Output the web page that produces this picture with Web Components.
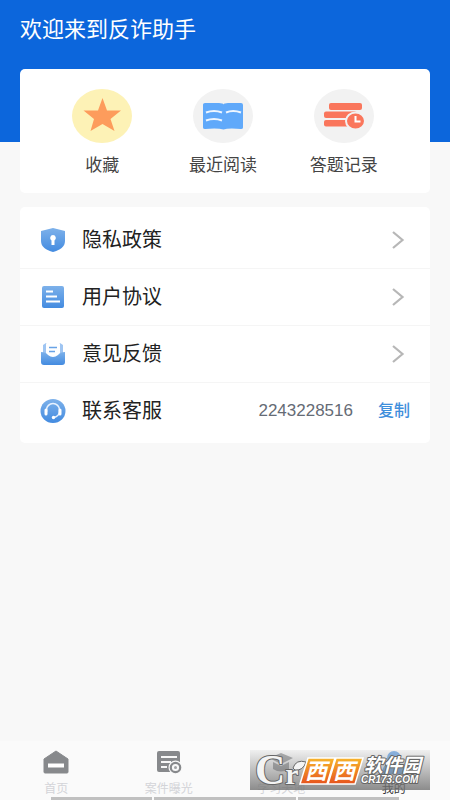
<!DOCTYPE html>
<html lang="zh-CN">
<head>
<meta charset="utf-8">
<meta name="viewport" content="width=device-width, initial-scale=1">
<title>反诈助手</title>
<style>
html, body { margin: 0; }
body { font-family: Roboto, "Noto Sans CJK SC", sans-serif; background: #f8f8f8; color: #222; }
</style>
</head>
<body>
<profile-page></profile-page>
<script>
const define = (name, html, setup) => {
  const t = document.createElement('template');
  t.innerHTML = html;
  customElements.define(name, class extends HTMLElement {
    constructor() {
      super();
      this.attachShadow({ mode: 'open' }).append(t.content.cloneNode(true));
    }
    connectedCallback() { if (setup) setup(this, this.shadowRoot); }
  });
};

const blue = '<defs><linearGradient id="g" x1="0" y1="0" x2="0" y2="1"><stop offset="0" stop-color="#7db1ea"/><stop offset="1" stop-color="#438be0"/></linearGradient></defs>';
const icons = {
  star: '<svg viewBox="0 0 60 54" width="60" height="54"><ellipse cx="30" cy="27" rx="30" ry="27" fill="#fdf2b6"/><path d="M30.500 9 35 21.500 49 21.500 38.500 30 42.500 42 30.500 35 18.500 42 22 30 11.500 21.500 26 21.500Z" fill="#fd9c5c"/></svg>',
  book: '<svg viewBox="0 0 60 54" width="60" height="54"><ellipse cx="30" cy="27" rx="30" ry="27" fill="#f2f2f2"/><path d="M10 15.500Q10 14 12 14H26Q30 14 30.500 15.500Q31 14 35 14H48Q50 14 50 16V38.500Q50 40 48 40Q35 39 30.500 40.500Q25 39 12 40Q10 40 10 38.500Z" fill="#60a9fa"/><path d="M13 23.500Q21 20.500 29 23.500M33 23.500Q40 20.500 48 23.500M13 31.500Q21 28.500 29 31.500" fill="none" stroke="#eef6ff" stroke-width="2"/></svg>',
  record: '<svg viewBox="0 0 60 54" width="60" height="54"><ellipse cx="30" cy="27" rx="30" ry="27" fill="#f2f2f2"/><g fill="#fa765c"><rect x="15" y="14" width="33" height="7" rx="2"/><rect x="10" y="22.500" width="33" height="6.500" rx="2"/><rect x="10" y="31" width="25" height="6.500" rx="2"/><ellipse cx="41.500" cy="32" rx="9.500" ry="8.500" stroke="#f2f2f2" stroke-width="2"/></g><path d="M41.500 27V32.500H46.500" fill="none" stroke="#fff" stroke-width="2"/></svg>',
  shield: `<svg viewBox="0 0 26 26" width="26" height="26">${blue}<path d="M13 1 25 4V14C25 20 20 23 13 25C6 23 1 20 1 14V4Z" fill="url(#g)"/><path d="M13 8a3 3 0 0 1 1.500 5.500V18h-3v-4.500A3 3 0 0 1 13 8Z" fill="#fff"/></svg>`,
  doc: `<svg viewBox="0 0 26 26" width="26" height="26">${blue}<rect x="2" y="2" width="22" height="22" rx="2" fill="url(#g)"/><path d="M6 7.500h7M6 12.500h11M6 17.500h14" stroke="#fff" stroke-width="2"/></svg>`,
  mail: `<svg viewBox="0 0 26 26" width="26" height="26">${blue}<path d="M3 4 6 2H20L23 4V12H3Z" fill="#9fc5f2"/><path d="M6 3Q6 2 7 2H19Q20 2 20 3V13Q17 16 13 16Q9 16 6 13Z" fill="#fff"/><path d="M9 6.500h8M9 10.500h6" stroke="#69a3e6" stroke-width="1.500"/><path d="M1 11Q6 11 8 14Q13 18 18 14Q20 11 25 11V21Q25 24 22 24H4Q1 24 1 21Z" fill="url(#g)"/></svg>`,
  service: `<svg viewBox="0 0 26 26" width="26" height="26">${blue}<ellipse cx="13" cy="13" rx="12.500" ry="12" fill="url(#g)"/><path d="M6.500 14V12A6.500 6.500 0 0 1 19.500 12V14Q19 18 14 19.500" fill="none" stroke="#e8f2ff" stroke-width="1.500"/><path d="M6 12v4M20 12v4" stroke="#fff" stroke-width="3" stroke-linecap="round"/><circle cx="13.500" cy="19.500" r="1.700" fill="#fff"/></svg>`,
  home: '<svg viewBox="0 0 26 24" width="26" height="24"><path d="M13 1 25 9V22Q25 23 24 23H2Q1 23 1 22V9Z" fill="#87898c" stroke="#87898c" stroke-linejoin="round"/><path d="M5 13.500H21V17.500H5Z" fill="#fff"/></svg>',
  cases: '<svg viewBox="0 0 26 24" width="26" height="24"><rect x="1" y="1" width="23" height="21" rx="2" fill="#87898c"/><path d="M5 7H21M5 12H15M5 17H11" stroke="#f8f8f8" stroke-width="2"/><circle cx="19.500" cy="17.500" r="7" fill="#f8f8f8"/><circle cx="19.500" cy="17.500" r="4.700" fill="none" stroke="#87898c" stroke-width="2.200"/><circle cx="19.500" cy="17.500" r="1.500" fill="#a0a2a5"/></svg>',
  study: '<svg viewBox="0 0 26 24" width="26" height="24"><path d="M1 8 13 3 25 8 13 14Z M5 12 13 16 21 12V19Q13 24 5 19Z" fill="#87898c"/></svg>',
  me: '<svg viewBox="0 0 26 24" width="26" height="24"><circle cx="13" cy="8" r="7" fill="#4e95e3"/><path d="M1 24Q1 14 9 13H17Q25 14 25 24Z" fill="#4e95e3"/></svg>',
  arrow: '<svg viewBox="0 0 14 20" width="14" height="20"><path d="M2 2 11.500 10 2 18" fill="none" stroke="#b7b7b7" stroke-width="2.200"/></svg>'
};
const fillIcon = (el, root) => { root.querySelector('.icon').innerHTML = icons[el.getAttribute('icon')]; };

define('quick-link', `<style>
:host { display: block; flex: 1; }
button { width: 100%; border: 0; padding: 0; background: none; font: inherit; font-size: 17px; line-height: 24px; color: #444; display: flex; flex-direction: column; align-items: center; gap: 10px; }
.icon, svg { display: block; }
</style><button type="button"><span class="icon"></span><span><slot></slot></span></button>`, fillIcon);

define('menu-row', `<style>
:host { display: block; border-bottom: 1px solid #f5f5f5; }
.row { box-sizing: border-box; width: 100%; height: 56px; padding: 0 25px 0 20px; font-size: 20px; line-height: 28px; color: #222; display: flex; align-items: center; gap: 16px; text-decoration: none; }
.label { flex: 1; }
.icon, svg { display: block; }
</style><a class="row" href="#"><span class="icon"></span><span class="label"><slot></slot></span><span class="end">${icons.arrow}</span></a>`, fillIcon);

define('contact-row', `<style>
:host { display: block; }
.row { height: 56px; padding: 0 20px; display: flex; align-items: center; gap: 16px; font-size: 20px; line-height: 28px; color: #222; }
.label { flex: 1; }
.number { font-family: "Liberation Sans", sans-serif; font-size: 17px; color: #656b75; }
button { border: 0; padding: 0; margin-left: 9px; background: none; font: inherit; font-size: 16px; font-weight: 500; color: #3f8fdc; }
.icon, svg { display: block; }
</style><div class="row"><span class="icon"></span><span class="label"><slot></slot></span><span class="number"><slot name="number"></slot></span><button type="button">复制</button></div>`, fillIcon);

define('white-card', `<style>
:host { display: block; background: #fff; border-radius: 5px; }
</style><slot></slot>`);

define('nav-tab', `<style>
:host { display: block; flex: 1; color: #d3d4d8; }
:host([active]) { color: #333; }
a { color: inherit; text-decoration: none; font-size: 12px; line-height: 14px; display: flex; flex-direction: column; align-items: center; gap: 8px; }
.icon, svg { display: block; }
</style><a href="#"><span class="icon"></span><span><slot></slot></span></a>`, fillIcon);

define('site-watermark', `<style>
:host { display: block; width: 180px; height: 40px; background: linear-gradient(rgba(225,225,225,.4), rgba(112,112,112,.8)); pointer-events: none; }
svg { display: block; overflow: visible; }
text { paint-order: stroke; stroke-linejoin: round; }
</style><svg viewBox="0 0 180 40" width="180" height="40" role="img" aria-label="西西软件园">
<defs><linearGradient id="o" x1="0" y1="0" x2="0" y2="1"><stop offset="0" stop-color="#f7b52c"/><stop offset="1" stop-color="#e6531d"/></linearGradient></defs>
<text x="5" y="34" fill="#f4f4f4" stroke="#666" stroke-width="2" font-family="Liberation Serif, serif" font-weight="bold" font-size="42">C<tspan font-size="30">r</tspan></text>
<path d="M43 18Q46 9 56 12Q53 21 45 20Z" fill="#f4f4f4" stroke="#666"/>
<path d="M58 8H85L77 34H50Z M86 8H113L105 34H78Z" fill="url(#o)" stroke="#fff" stroke-width="1.500"/>
<g fill="#fff" font-family="Noto Sans CJK SC, sans-serif" font-style="italic" font-weight="bold">
<text x="55" y="29" font-size="22">西</text><text x="83" y="29" font-size="22">西</text>
<text x="114" y="22" font-size="19" stroke="#666" stroke-width="2">软件园</text></g>
<text x="111" y="33" font-family="Liberation Sans, sans-serif" font-style="italic" font-weight="bold" font-size="10" fill="#fff" stroke="#666" stroke-width="2">CR173.COM</text>
</svg>`);

define('bottom-nav', `<style>
:host { display: block; position: relative; background: #fafafa; }
nav { display: flex; padding: 9px 0 1px; }
.lines { display: flex; gap: 2px; padding: 0 51px; }
.lines i { height: 3px; background: #c0c0c0; flex: 5; }
.lines i:nth-child(2) { flex: 7; }
site-watermark { position: absolute; right: 20px; bottom: 10px; }
</style><nav aria-label="主导航">
<nav-tab icon="home">首页</nav-tab><nav-tab icon="cases">案件曝光</nav-tab><nav-tab icon="study">学习天地</nav-tab><nav-tab icon="me" active>我的</nav-tab>
</nav><div class="lines"><i></i><i></i><i></i></div><site-watermark></site-watermark>`);

define('profile-page', `<style>
:host { display: flex; flex-direction: column; min-height: 100vh; background: linear-gradient(#0c66dc 142px, #f8f8f8 142px); }
h1 { margin: 0; padding: 14px 20px 23px; font-size: 22px; line-height: 32px; font-weight: 400; color: #fff; }
main { flex: 1; display: flex; flex-direction: column; gap: 14px; padding: 0 20px 20px; }
.quick { display: flex; padding: 20px 26px 16px 22px; }
.menu { padding: 5px 0 4px; }
</style>
<header><h1>欢迎来到反诈助手</h1></header>
<main>
<white-card><div class="quick"><quick-link icon="star">收藏</quick-link><quick-link icon="book">最近阅读</quick-link><quick-link icon="record">答题记录</quick-link></div></white-card>
<white-card><div class="menu"><menu-row icon="shield">隐私政策</menu-row><menu-row icon="doc">用户协议</menu-row><menu-row icon="mail">意见反馈</menu-row><contact-row icon="service">联系客服<span slot="number">2243228516</span></contact-row></div></white-card>
</main>
<bottom-nav></bottom-nav>`);
</script>
</body>
</html>
